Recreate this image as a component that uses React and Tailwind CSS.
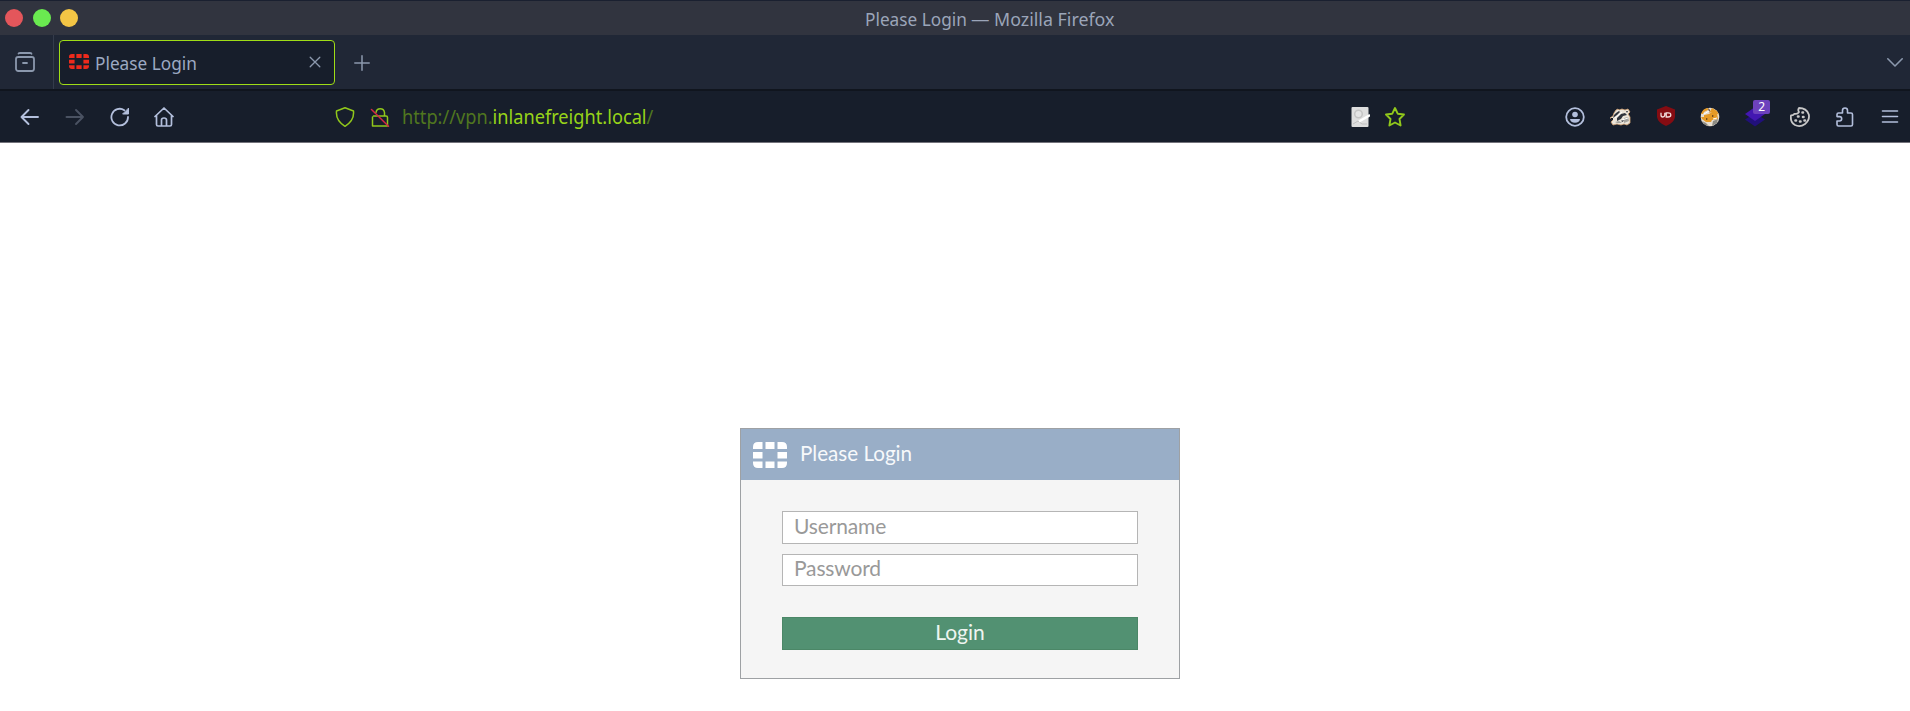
import React from "react";

const ui = "font-['Noto_Sans',sans-serif]";

function GridLogo({ className, fill }) {
  return (
    <svg className={className} viewBox="0 0 34 26" fill={fill} preserveAspectRatio="none">
      <path d="M5 0H9.500V7H0V5Q0 0 5 0ZM12.500 0H21.500V7H12.500ZM24.500 0H29Q34 0 34 5V7H24.500ZM0 10H9.500V16.500H0ZM24.500 10H34V16.500H24.500ZM0 19.500H9.500V26H5Q0 26 0 21ZM12.500 19.500H21.500V26H12.500ZM24.500 19.500H34V21Q34 26 29 26H24.500Z" />
    </svg>
  );
}

function Line({ className, children, w = 1.7 }) {
  return (
    <svg className={className} viewBox="0 0 20 20" fill="none" stroke="currentColor" strokeWidth={w} strokeLinecap="round" strokeLinejoin="round">
      {children}
    </svg>
  );
}

function TitleBar() {
  return (
    <header className="flex h-[35px] items-center border-t border-[#1a2030] bg-[#31343f] pl-[5px]">
      <div className="flex w-[860px] gap-[9.500px]">
        <i className="size-[18px] rounded-full bg-[#e4565b]" />
        <i className="size-[18px] rounded-full bg-[#6aea50]" />
        <i className="size-[18px] rounded-full bg-[#f3c545]" />
      </div>
      <div className={`${ui} flex translate-y-px whitespace-nowrap text-[18.500px] leading-[34px] text-[#9ba5b9]`}>
        <span className="w-[106px] origin-left scale-x-[0.932]">Please Login</span>
        <span className="w-[23px]">—</span>
        <span className="origin-left scale-x-[0.963]">Mozilla Firefox</span>
      </div>
    </header>
  );
}

function TabStrip() {
  return (
    <div className="flex h-[54px] items-center bg-[#202736] text-[#8b98ad]">
      <div className="flex h-full w-[54px] items-center border-r border-[#343b4b] pl-[15px]">
        <Line className="size-5" w={1.8}>
          <path d="M3.500 1.600Q3.500 1 5 1H15Q16.500 1 16.500 1.800" />
          <rect x="1" y="5" width="18" height="14" rx="2.200" />
          <path d="M8 11H12" />
        </Line>
      </div>
      <div className="ml-[5px] flex h-[45px] w-[276px] items-center rounded-[4px] border border-[#9fdd16] bg-[#171e2b] pl-[9px]">
        <GridLogo className="h-[15px] w-[20px] -translate-y-px" fill="#ee2a1c" />
        <span className={`${ui} ml-[6px] w-[214px] origin-left translate-y-px scale-x-[0.932] whitespace-nowrap text-[18.500px] text-[#9ca9c2]`}>Please Login</span>
        <Line className="size-3" w={2.2}><path d="M2 2L18 18M18 2L2 18" /></Line>
      </div>
      <Line className="ml-[19px] size-4 translate-y-px" w={1.9}><path d="M10 1V19M1 10H19" /></Line>
      <Line className="mr-[7px] ml-auto size-4" w={2}><path d="M1 6L10 15L19 6" /></Line>
    </div>
  );
}

function Shield() {
  return (
    <svg className="size-5" viewBox="0 0 20 20">
      <path d="M10 0L19 3.500V11Q18 17 10 20Q2 17 1 11V3.500Z" fill="#850c12" />
      <path d="M5 6.800V9Q5 11 6.800 11T8.800 9V6.800M10.200 6.800V11H12Q14.800 11 14.800 8.900T12 6.800Z" fill="none" stroke="#f4dede" strokeWidth="1.300" />
    </svg>
  );
}

function Badger() {
  return (
    <svg className="h-[18px] w-[21px]" viewBox="0 0 21 18">
      <path d="M4 5L6 2L8 1L9 2L12 1L15 2L18 1L20 4L18 6L20 9L20 15L17 17L14 16L11 17L7 16L3 17L1 14L3 12L0 10L3 8Z" fill="#ece5da" stroke="#d2a273" strokeWidth=".8" />
      <path d="M4 7L6 5L9 3L10 4L7 7L3 10ZM7 10L11 6L15 5L17 7L13 8L11 11L7 13ZM16 3L18 3L17 5Z" fill="#30343c" />
      <path d="M14 10L18 9L19 13L14 15ZM5 14L9 13L12 15L7 15Z" fill="#a5a49f" />
      <path d="M0.500 10L3 10L3 12L1.500 12Z" fill="#181b22" />
      <path d="M11 13L14 11L13 14Z" fill="#30343c" />
      <path d="M5 10L12 4M12 12L18 10" stroke="#fff" strokeWidth="1" />
    </svg>
  );
}

function Fox() {
  return (
    <svg className="size-5" viewBox="0 0 20 20">
      <circle cx="10" cy="10" r="9.300" fill="#e6ddd0" />
      <path d="M1 7Q3 1 8 1L8 3L4 5L3 7ZM12 1L17 4L19 8L16 6L12 5L9 6ZM4 8L9 7L12 5L17 6L18 12L12 13L11 15L6 15L2 12L1 10L4 10Z" fill="#e69a26" />
      <path d="M2 14L6 16L9 19L5 18ZM13 14L18 12L17 16L12 19Z" fill="#8d8b83" />
      <path d="M12 8L14 9L12 10ZM6 11L8 12L6 13ZM8 1L10 3L9 5Z" fill="#54371a" />
      <path d="M4 7L9 4M13 12L17 11" stroke="#fff" strokeWidth="1" />
    </svg>
  );
}

function Layers() {
  return (
    <div className="relative size-5">
      <svg className="size-5 overflow-visible" viewBox="0 0 20 20">
        <path d="M0 12.500L10 6L20 12.500L10 19.500Z" fill="#21107a" />
        <path d="M0 7L10 0L20 7L10 14Z" fill="#4317b1" />
      </svg>
      <span className={`${ui} absolute -top-[7px] left-[8px] flex h-[14px] w-[17px] items-center justify-center rounded-[2px] bg-[#6d42bd] text-[12px] leading-none text-white`}>2</span>
    </div>
  );
}

function NavBar() {
  return (
    <nav className="flex h-[54px] items-center border-t-2 border-b border-t-[#10151e] border-b-[#73737b] bg-[#171e2b] text-[#b3bfdc]">
      <div className="flex w-[335px] items-center gap-[25px] pl-5">
        <Line className="size-5" w={1.9}><path d="M18 10H1.500M8.500 3L1.500 10L8.500 17" /></Line>
        <Line className="size-5 text-[#4a5262]" w={1.9}><path d="M1.500 10H18M11 3L18 10L11 17" /></Line>
        <Line className="size-5" w={1.8}>
          <path d="M18 10A8.300 8.300 0 1 1 14.300 3.200" />
          <path d="M18.500 1.500V7H13Z" fill="currentColor" strokeWidth="1" />
        </Line>
        <Line className="size-5 -translate-x-px" w={1.7}>
          <path d="M1 9.500L10 1L19 9.500M2.500 8.500V17.500Q2.500 19 4 19H16Q17.500 19 17.500 17.500V8.500M7.500 19V13Q7.500 11 10 11T12.500 13V19" />
        </Line>
      </div>
      <div className="flex w-[1231px] items-center text-[#91c81b]">
        <Line className="size-5" w={1.5}>
          <path d="M10 .8L18.500 4Q19.500 13.500 10 19.300Q.5 13.500 1.500 4Z" />
        </Line>
        <Line className="ml-[15px] size-5" w={1.5}>
          <path d="M6 5.500A4.300 4.300 0 0 1 14.500 5.500V8.500M3.500 9H16Q17.500 9 17.500 10.500V19H2.500V10" />
          <path d="M1.500 2.500L18.500 19.300" stroke="#d32747" />
        </Line>
        <div className={`${ui} ml-[12px] w-[948px] origin-left translate-y-px scale-x-[0.958] whitespace-nowrap text-[19px] text-[#50761f]`}>http://vpn.<span className="text-[#97d419]">inlanefreight.local</span>/</div>
        <svg className="size-5" viewBox="0 0 20 20">
          <rect x="1.500" width="17" height="20" rx="1" fill="#dedede" />
          <circle cx="8.500" cy="7" r="3.800" fill="#e4e4e4" stroke="#c4c4c4" strokeWidth="1.500" />
          <path d="M3 17L8 14L12 17H17" stroke="#c0c0c0" fill="none" />
          <path d="M9 14.500L20 8" stroke="#fff" strokeWidth="2.500" />
        </svg>
        <Line className="ml-[15px] size-5" w={1.9}>
          <path d="M10 1L12.700 6.700L19 7.500L14.500 12L15.600 18.500L10 15.500L4.400 18.500L5.500 12L1 7.500L7.300 6.700Z" />
        </Line>
      </div>
      <div className="flex -translate-x-px items-center gap-[24.800px]">
        <Line className="size-5" w={1.8}>
          <circle cx="10" cy="10" r="8.800" />
          <circle cx="10" cy="7.500" r="2.800" fill="currentColor" stroke="none" />
          <path d="M5 12H15Q14.500 15.800 10 15.800T5 12Z" fill="currentColor" stroke="none" />
        </Line>
        <Badger />
        <div className="-translate-y-px"><Shield /></div>
        <Fox />
        <Layers />
        <Line className="size-5 text-[#c8c8c8]" w={1.8}>
          <path d="M9 1Q7.500 3 9 5Q7.500 7.500 4.500 6.800Q3.500 8.500 1 8.500Q0 15 5 18Q10 20.500 15 17Q20 13 18.800 7.500Q16.500 1 9 1Z" />
          <path d="M12.500 5.500H13M8 9.500H8.500M13 10H13.500M5.500 13.500H6M10 14.500H10.500M14.500 13.500H15" strokeWidth="2.600" />
        </Line>
        <Line className="size-5" w={1.6}>
          <path d="M3.500 6H7.500V3.500A2.500 2.500 0 0 1 12.500 3.500V6H16Q17.500 6 17.500 7.500V17.500Q17.500 19 16 19H3.500Q2 19 2 17.500V14H4.500A2.200 2.200 0 0 0 4.500 9.600H2V7.500Q2 6 3.500 6Z" />
        </Line>
        <Line className="size-5" w={1.6}><path d="M2.500 4H17.500M2.500 9.500H17.500M2.500 15H17.500" /></Line>
      </div>
    </nav>
  );
}

function Login() {
  return (
    <form className="mt-[285px] ml-[740px] h-[251px] w-[440px] border border-[#9ea1a4] bg-[#f5f5f5] font-['Lato',sans-serif] text-[21px]">
      <div className="flex h-[51px] items-center bg-[#99aec7] pl-3">
        <GridLogo className="h-[26px] w-[34px]" fill="#ffffff" />
        <span className="ml-[13px] origin-left -translate-y-[2px] scale-x-[0.982] whitespace-nowrap text-[#f7f9fb]">Please Login</span>
      </div>
      <div className="px-[41px] pt-[31px]">
        <input className="block h-[33px] w-[356px] border border-[#b5b5b5] bg-white px-[11px] pb-[5px] tracking-[-0.150px] placeholder:text-[#999999]" placeholder="Username" />
        <input className="mt-[10px] block h-[32px] w-[356px] border border-[#b5b5b5] bg-white px-[11px] pb-[5px] tracking-[-0.150px] placeholder:text-[#999999]" placeholder="Password" />
        <button type="button" className="mt-[31px] block h-[33px] w-[356px] border border-[#4b8767] bg-[#529172] pb-[5px] leading-none text-[#eef5f0]">Login</button>
      </div>
    </form>
  );
}

export default function App() {
  return (
    <div className="h-[711px] w-[1910px] overflow-hidden bg-white">
      <TitleBar />
      <TabStrip />
      <NavBar />
      <Login />
    </div>
  );
}
